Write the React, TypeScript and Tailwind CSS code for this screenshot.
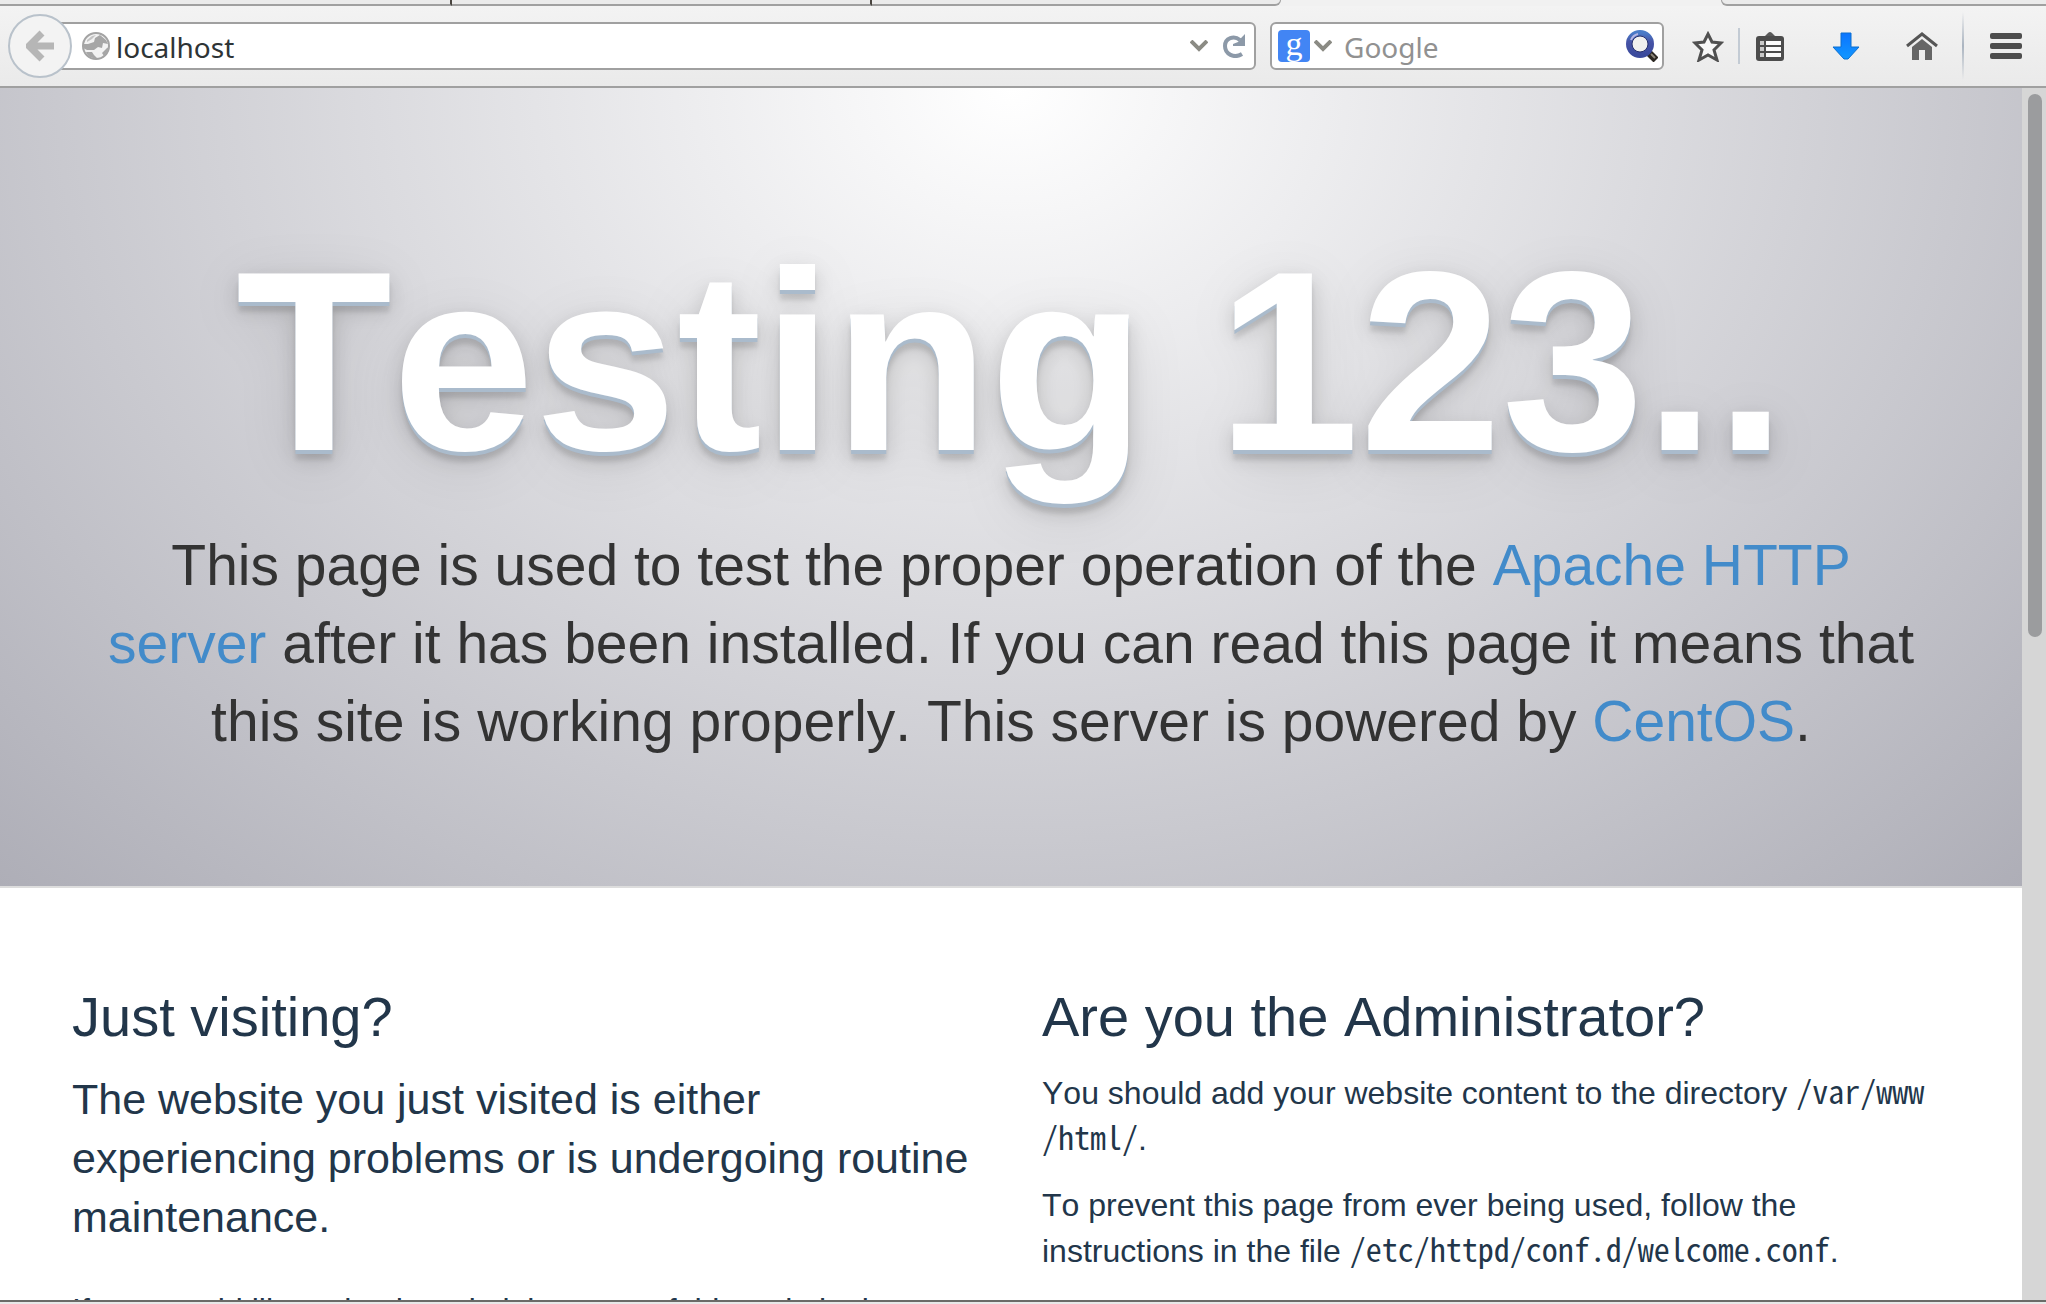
import React from 'react';

function BackIcon() {
  return (
    <svg viewBox="0 0 28 32" className="h-8 w-7" aria-hidden="true">
      <path
        d="M16 3 L3 16 L16 29 M4 16 H28"
        fill="none"
        stroke="#b6b6b6"
        strokeWidth="7"
        strokeLinejoin="round"
      />
    </svg>
  );
}

function GlobeIcon() {
  return (
    <svg viewBox="0 0 28 28" className="h-7 w-7 shrink-0" aria-hidden="true">
      <circle cx="14" cy="14" r="13" fill="#f2f2f2" stroke="#a3a3a3" strokeWidth="2" />
      <path d="M6 12 L12 10 L13 6 L18 3 L24 8 L26 12 L21 11 L20 16 L16 15 L12 18 L5 18 L1 16 L2 12 Z" fill="#a6a6a6" />
      <path d="M4 20 L10 20 L12 23 L15 26 C11 27 6 25 4 20 Z M25 16 L27 15 C26 19 24 22 22 24 L20 21 Z" fill="#a6a6a6" />
      <path d="M5 8 L10 4 L14 3 L10 7 L5 10 Z" fill="#c4c4c4" />
    </svg>
  );
}

function ChevronIcon() {
  return (
    <svg viewBox="0 0 18 12" className="h-3 w-[18px]" aria-hidden="true">
      <path d="M1 1 L9 9 L17 1" fill="none" stroke="#8b8b84" strokeWidth="4" />
    </svg>
  );
}

function ReloadIcon() {
  return (
    <svg viewBox="0 0 24 24" className="h-6 w-6" aria-hidden="true">
      <path d="M20 20 C12 25 3 20 3 12 C3 4 12 1 18 6" fill="none" stroke="#8c99a8" strokeWidth="4" />
      <path d="M23 0 V12 H11 V10 L16 8 L20 3 Z" fill="#8c99a8" />
    </svg>
  );
}

function SearchIcon() {
  return (
    <svg viewBox="0 0 32 32" className="h-8 w-8" aria-hidden="true">
      <defs>
        <linearGradient id="ring" x1="0" y1="0" x2="0" y2="1">
          <stop offset="0" stopColor="#4a7cc8" />
          <stop offset="0.4" stopColor="#4653a6" />
          <stop offset="1" stopColor="#3a4a9c" />
        </linearGradient>
      </defs>
      <path d="M23 23 L30 30" stroke="#2b2722" strokeWidth="7" />
      <path d="M25 24 L29 28" stroke="#8d857a" strokeWidth="2" />
      <circle cx="14" cy="14" r="11" fill="#f0f0ee" stroke="url(#ring)" strokeWidth="6" />
      <path d="M5 10 A10 10 0 0 1 12 4" fill="none" stroke="#b3b6e4" strokeWidth="2" />
      <circle cx="14" cy="14" r="8" fill="none" stroke="#26306c" strokeWidth="1" />
    </svg>
  );
}

function StarIcon() {
  return (
    <svg viewBox="0 0 32 32" className="h-8 w-8" aria-hidden="true">
      <path
        d="M16 4 L20 12 L29 13 L22 20 L25 30 L16 25 L7 30 L10 20 L3 13 L12 12 Z"
        fill="#f7f7f7"
        stroke="#505050"
        strokeWidth="3"
      />
    </svg>
  );
}

function ClipboardIcon() {
  return (
    <svg viewBox="0 0 28 30" className="h-[30px] w-7" aria-hidden="true">
      <path d="M8 6 L12 2 Q14 0 16 2 L20 6 Z" fill="#5a5a5a" />
      <rect x="0" y="5" width="28" height="25" rx="3" fill="#4c4c4c" />
      <path d="M4 10 H8 V14 H4 Z M4 16 H8 V20 H4 Z M4 22 H8 V26 H4 Z" fill="#c9c9c9" />
      <path d="M10 10 H25 V14 H10 Z M10 16 H25 V20 H10 Z M10 22 H25 V26 H10 Z" fill="#fafafa" />
    </svg>
  );
}

function DownloadIcon() {
  return (
    <svg viewBox="0 0 28 28" className="h-7 w-7" aria-hidden="true">
      <defs>
        <linearGradient id="arrow" x1="0" y1="0" x2="0" y2="1">
          <stop offset="0" stopColor="#0a74ff" />
          <stop offset="1" stopColor="#1297ff" />
        </linearGradient>
      </defs>
      <path d="M9 1 H19 V15 H27 L16 27 H12 L1 15 H9 Z" fill="url(#arrow)" stroke="#0b6fd0" strokeWidth="1" />
    </svg>
  );
}

function HomeIcon() {
  return (
    <svg viewBox="0 0 32 28" className="h-7 w-8" aria-hidden="true">
      <path d="M1 14 L16 2 L31 14" fill="none" stroke="#555555" strokeWidth="3" />
      <path d="M6 15 L16 7 L26 15 V28 H19 V18 H13 V28 H6 Z" fill="#666666" />
    </svg>
  );
}

function MenuIcon() {
  return (
    <svg viewBox="0 0 32 26" className="h-[26px] w-8" aria-hidden="true">
      <g fill="#4d4d4d">
        <rect width="32" height="6" rx="2" />
        <rect y="10" width="32" height="6" rx="2" />
        <rect y="20" width="32" height="6" rx="2" />
      </g>
    </svg>
  );
}

function TabStrip() {
  return (
    <div className="flex h-1.5 shrink-0 bg-[#f1f1f1]" role="presentation">
      <div className="w-[22.1%] border-r-2 border-b-2 border-r-[#4a4640] border-b-[#a0a0a0] bg-[#ebebeb]" />
      <div className="w-[20.5%] border-r-2 border-b-2 border-r-[#4a4640] border-b-[#a0a0a0] bg-[#ebebeb]" />
      <div className="w-[20%] rounded-br-lg border-r border-b-2 border-[#a0a0a0] bg-[#ebebeb]" />
      <div className="flex-1" />
      <div className="w-[15.9%] rounded-bl-lg border-b-2 border-l border-[#a0a0a0] bg-[#ebebeb]" />
    </div>
  );
}

function Toolbar() {
  return (
    <header className="flex h-[82px] shrink-0 items-center border-b-2 border-[#a0a0a0] bg-linear-to-b from-[#f3f3f3] to-[#eaeaea] pl-2 font-['Noto_Sans']">
      <button
        type="button"
        aria-label="Back"
        className="z-10 flex h-16 w-16 shrink-0 items-center justify-center rounded-full border-2 border-[#b9c2cb] bg-[#f3f3f3]"
      >
        <BackIcon />
      </button>
      <form className="-ml-4 flex h-12 flex-1 items-center gap-1.5 rounded-r-md border-2 border-[#a0a0a0] bg-white pr-2 pl-6">
        <GlobeIcon />
        <input
          aria-label="Address"
          defaultValue="localhost"
          className="min-w-0 flex-1 bg-transparent pt-0.5 text-[28px] text-[#2e3436] outline-none"
        />
        <button type="button" aria-label="Show history" className="mr-2">
          <ChevronIcon />
        </button>
        <button type="button" aria-label="Reload">
          <ReloadIcon />
        </button>
      </form>
      <form className="ml-3.5 flex h-12 w-[394px] shrink-0 items-center rounded-md border-2 border-[#a0a0a0] bg-white pr-1 pl-1.5">
        <button type="button" aria-label="Choose search engine" className="flex items-center gap-1">
          <span className="flex h-8 w-8 items-center justify-center rounded-sm bg-[#4285f4] pb-1 font-['Liberation_Serif'] text-[34px] leading-none text-white">
            g
          </span>
          <ChevronIcon />
        </button>
        <input
          aria-label="Search"
          placeholder="Google"
          className="ml-3 min-w-0 flex-1 bg-transparent pt-0.5 text-[28px] outline-none placeholder:text-[#919191]"
        />
        <button type="button" aria-label="Search">
          <SearchIcon />
        </button>
      </form>
      <nav aria-label="Browser tools" className="flex shrink-0 items-center">
        <button type="button" aria-label="Bookmark this page" className="ml-7">
          <StarIcon />
        </button>
        <span className="ml-3.5 h-9 w-0.5 bg-[#c3cbd4]" />
        <button type="button" aria-label="Bookmarks" className="ml-4">
          <ClipboardIcon />
        </button>
        <button type="button" aria-label="Downloads" className="ml-12">
          <DownloadIcon />
        </button>
        <button type="button" aria-label="Home" className="ml-[46px]">
          <HomeIcon />
        </button>
        <span className="ml-6 h-[68px] w-0.5 bg-linear-to-b from-transparent via-[#aab4c0] to-transparent" />
        <button type="button" aria-label="Menu" className="mr-6 ml-[26px]">
          <MenuIcon />
        </button>
      </nav>
    </header>
  );
}

function Hero() {
  return (
    <section className="border-b-2 border-[#dddddd] bg-[radial-gradient(ellipse_farthest-corner_at_top,#ffffff_0%,#aeaeb7_100%)] px-24 pt-[132px] pb-[126px] text-center">
      <h1 className="text-[256px] leading-[282px] font-bold whitespace-nowrap text-white [text-shadow:0_4px_0_#aabbcc,0_8px_20px_rgba(0,0,0,0.15),0_10px_4px_rgba(0,0,0,0.1),0_12px_60px_rgba(0,0,0,0.1)]">
        Testing 123..
      </h1>
      <p className="mt-6 text-[57px] leading-[78px] text-[#333333]">
        This page is used to test the proper operation of the{' '}
        <a href="#apache" className="text-[#428bca]">
          Apache HTTP server
        </a>{' '}
        after it has been installed. If you can read this page it means that this site is working
        properly. This server is powered by{' '}
        <a href="#centos" className="text-[#428bca]">
          CentOS
        </a>
        .
      </p>
    </section>
  );
}

function Details() {
  return (
    <section className="grid grid-cols-2 gap-x-[62px] px-[72px] pt-24 text-[#22364a]">
      <div>
        <h2 className="text-[56px] leading-[66px]">Just visiting?</h2>
        <p className="mt-5 text-[43px] leading-[59px]">
          The website you just visited is either experiencing problems or is undergoing routine
          maintenance.
        </p>
        <p className="mt-10 text-[32px] leading-[46px]">
          If you would like to let the administrators of this website know that you've seen this page
          instead of the page you've expected, you should send them e-mail.
        </p>
      </div>
      <div>
        <h2 className="text-[56px] leading-[66px]">Are you the Administrator?</h2>
        <p className="mt-5 text-[32px] leading-[46px]">
          You should add your website content to the directory{' '}
          <code className="font-['Noto_Sans_Mono_CJK_SC','Liberation_Mono',monospace] leading-none">
            /var/www
            <wbr />
            /html/
          </code>
          .
        </p>
        <p className="mt-5 text-[32px] leading-[46px]">
          To prevent this page from ever being used, follow the instructions in the file{' '}
          <code className="font-['Noto_Sans_Mono_CJK_SC','Liberation_Mono',monospace] leading-none">
            /etc/httpd/conf.d/welcome.conf
          </code>
          .
        </p>
      </div>
    </section>
  );
}

export default function App() {
  return (
    <div className="flex h-screen flex-col overflow-hidden bg-white font-['Liberation_Sans',Arial,sans-serif] [font-kerning:none]">
      <TabStrip />
      <Toolbar />
      <div className="flex min-h-0 flex-1">
        <main className="min-w-0 flex-1 overflow-hidden bg-white">
          <Hero />
          <Details />
        </main>
        <div className="w-6 shrink-0 bg-[#d6d6d6] px-1 pt-1.5 pl-1.5">
          <div className="h-[45%] w-3.5 rounded-full bg-[#9b9c9e]" />
        </div>
      </div>
      <footer className="h-1 shrink-0 border-t-2 border-[#6b6b68] bg-[#e8e8e8]" />
    </div>
  );
}
